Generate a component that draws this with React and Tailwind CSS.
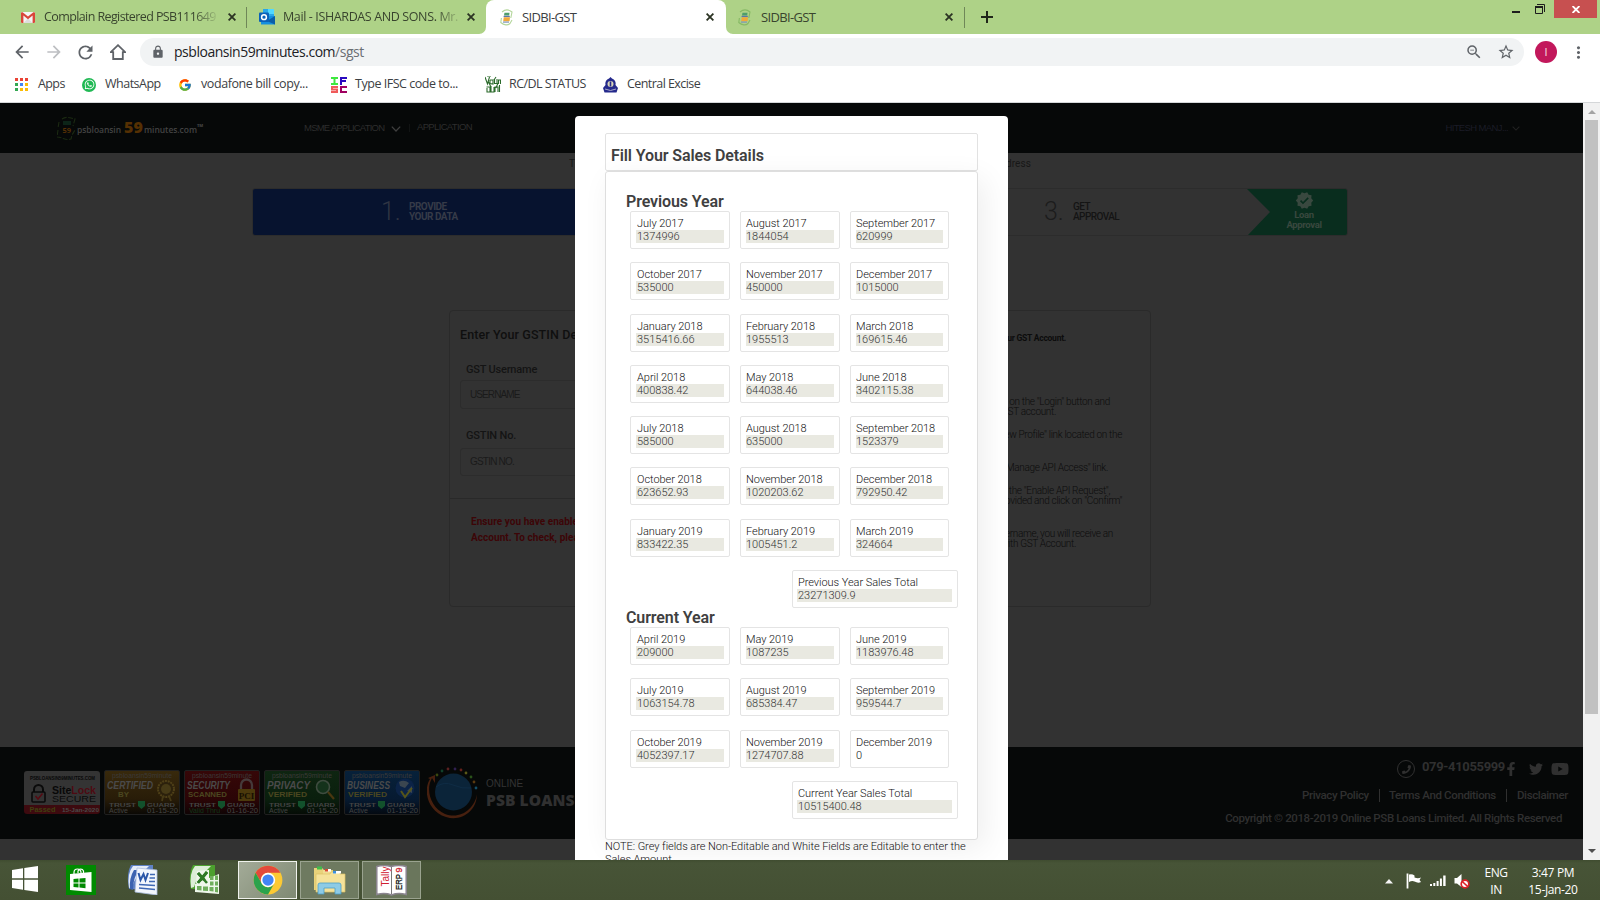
import React from "react";
import { FaFacebookF, FaTwitter, FaYoutube, FaWhatsapp, FaPhoneAlt } from "react-icons/fa";
import { FcGoogle } from "react-icons/fc";
import { MdArrowBack, MdArrowForward, MdRefresh, MdLock, MdStarBorder, MdZoomOut, MdMoreVert, MdVerified } from "react-icons/md";

const ui = "font-['Open_Sans','Noto_Sans',sans-serif] whitespace-nowrap";
const arial = "font-['Liberation_Sans',Arial,sans-serif] whitespace-nowrap";

function Close() {
  return (
    <svg className="w-[8px] h-[8px] shrink-0" viewBox="0 0 8 8">
      <path d="M0.6 0.6L7.4 7.4M7.4 0.6L0.6 7.4" stroke="#2b3323" strokeWidth="1.8" />
    </svg>
  );
}

function GmailIcon() {
  return (
    <svg className="w-[14px] h-[11px]" viewBox="0 0 14 11">
      <rect width="14" height="11" rx="1" fill="#f5f5f5" />
      <path d="M2.4 11L7 6.5 11.6 11z" fill="#ddd" />
      <path d="M0 1.2V10a1 1 0 0 0 1 1h1.4V3.6L7 7.2l4.6-3.6V11H13a1 1 0 0 0 1-1V1.2C14 .2 13 0 12.4.3L7 4.5 1.6.3C1 0 0 .2 0 1.2z" fill="#d9453a" />
    </svg>
  );
}

function OutlookIcon() {
  return (
    <svg className="w-[16px] h-[16px]" viewBox="0 0 16 16">
      <rect x="4" width="11" height="10" fill="#28a8ea" />
      <rect x="9" width="6" height="5" fill="#50d9ff" />
      <path d="M2 7L16 7V15.5H2z" fill="#1490df" />
      <path d="M16 7L8 12 16 15.5z" fill="#0a5ea8" />
      <rect y="3.5" width="10" height="9.5" rx="1" fill="#0a62b8" />
      <circle cx="5" cy="8.2" r="2.4" fill="none" stroke="#fff" strokeWidth="1.5" />
    </svg>
  );
}

function SidbiIcon({ dim }) {
  return (
    <svg className="w-[13px] h-[17px]" viewBox="0 0 13 17">
      <path d="M2 3C5 .5 9 .5 12 3L10.8 9M1.4 9L.8 13.500C4 16.500 8 16.500 10 14.500L12 11" fill="none" stroke={dim ? "#86b964" : "#b4d69b"} strokeWidth="1.1" />
      <path d="M4.500 3.800H9.500L9.200 6.600H4z" fill="#4f9e6a" />
      <rect x="3.600" y="6.800" width="6.200" height="1.300" fill="#5c77a8" />
      <path d="M3.800 8.300H10L9.500 12.200H3.200z" fill="#f0a93a" />
      <rect x="3" y="12.500" width="6" height="1.200" fill="#7d94b8" />
    </svg>
  );
}

function TabStrip() {
  return (
    <div className="flex h-[34px] bg-[#aed287] shrink-0">
      <div className="flex items-center w-[247px] pl-[21px] h-[34px] border-r border-[#6f8758] [border-image:linear-gradient(to_bottom,transparent_8px,#6f8758_8px,#6f8758_27px,transparent_27px)_1]">
        <GmailIcon />
        <div className={`${ui} text-[12.5px] leading-[18px] tracking-[-0.6px] text-[#39442e] ml-[9px] w-[176px] [mask-image:linear-gradient(to_right,#000_85%,transparent)]`}>Complain Registered PSB111649</div>
        <div className="ml-[8px] flex"><Close /></div>
      </div>
      <div className="flex items-center w-[239px] pl-[12px] h-[34px] rounded-br-[8px]">
        <OutlookIcon />
        <div className={`${ui} text-[12.5px] leading-[18px] tracking-[-0.38px] text-[#39442e] ml-[8px] w-[180px] [mask-image:linear-gradient(to_right,#000_85%,transparent)]`}>Mail - ISHARDAS AND SONS. Mr.</div>
        <div className="ml-[4px] flex"><Close /></div>
      </div>
      <div className="relative flex items-center w-[240px] pl-[14px] h-[34px] rounded-t-[8px] bg-white">
        <svg className="absolute left-[-7px] bottom-0 w-[7px] h-[7px]" viewBox="0 0 7 7"><path d="M7 0V7H0A7 7 0 0 0 7 0z" fill="#fff" /></svg>
        <svg className="absolute right-[-7px] bottom-0 w-[7px] h-[7px]" viewBox="0 0 7 7"><path d="M0 0V7H7A7 7 0 0 1 0 0z" fill="#fff" /></svg>
        <SidbiIcon />
        <div className={`${ui} text-[13px] leading-[18px] tracking-[-0.65px] text-[#3c4043] ml-[9px] w-[184px]`}>SIDBI-GST</div>
        <Close />
      </div>
      <div className="flex items-center w-[239px] pl-[12px] h-[34px] border-r border-[#6f8758] [border-image:linear-gradient(to_bottom,transparent_8px,#6f8758_8px,#6f8758_27px,transparent_27px)_1]">
        <SidbiIcon dim />
        <div className={`${ui} text-[13px] leading-[18px] tracking-[-0.65px] text-[#39442e] ml-[10px] w-[184px]`}>SIDBI-GST</div>
        <Close />
      </div>
      <svg className="w-[12px] h-[12px] mt-[11px] ml-[16px]" viewBox="0 0 12 12"><path d="M6 0V12M0 6H12" stroke="#20261a" strokeWidth="2" /></svg>
      <div className="flex ml-auto mr-[3px]">
        <div className="w-[8px] h-[2px] bg-[#1d1d1d] mt-[11px]" />
        <svg className="w-[11px] h-[11px] ml-[15px] mt-[4px]" viewBox="0 0 11 11"><path d="M2 .5H9.5V8" fill="none" stroke="#1d1d1d" /><path d="M0.5 2.5H7.5V9.5H.5z" fill="none" stroke="#1d1d1d" /><path d="M0 3H8" stroke="#1d1d1d" strokeWidth="2" /></svg>
        <div className="flex items-center justify-center ml-[8px] w-[43px] h-[18px] bg-[#c75050]">
          <svg className="w-[8px] h-[7px]" viewBox="0 0 8 7"><path d="M.6 0L7.4 7M7.4 0L.6 7" stroke="#fff" strokeWidth="1.8" /></svg>
        </div>
      </div>
    </div>
  );
}

function Toolbar() {
  return (
    <div className="flex items-center h-[36px] bg-white shrink-0 pl-[12px]">
      <MdArrowBack className="text-[20px] text-[#5f6368]" />
      <MdArrowForward className="text-[20px] text-[#bdbfc2] ml-[12px]" />
      <MdRefresh className="text-[21px] text-[#5f6368] ml-[11px]" />
      <svg className="w-[16px] h-[16px] ml-[14px]" viewBox="0 0 16 16"><path d="M0.8 8.2L8 1.2 15.2 8.2H12.8V15H3.2V8.2z" fill="none" stroke="#5f6368" strokeWidth="1.8" /></svg>
      <div className="flex items-center w-[1384px] h-[28px] ml-[14px] rounded-full bg-[#f1f3f4] pl-[11px] pr-[9px]">
        <MdLock className="text-[14px] text-[#5f6368]" />
        <div className={`${ui} text-[14px] leading-[20px] tracking-[-0.47px] text-[#202124] ml-[9px]`}>psbloansin59minutes.com<span className="text-[#6a6e73]">/sgst</span></div>
        <MdZoomOut className="text-[18px] text-[#5f6368] ml-auto" />
        <MdStarBorder className="text-[18px] text-[#5f6368] ml-[14px]" />
      </div>
      <div className="flex items-center justify-center w-[22px] h-[22px] rounded-full bg-[#c2185b] ml-[11px] text-[11px] leading-none text-[#f3cddc] font-['Roboto',sans-serif]">I</div>
      <MdMoreVert className="text-[19px] text-[#5f6368] ml-[12px]" />
    </div>
  );
}

function AppsIcon() {
  const c = ["#ea4335", "#ea4335", "#ea4335", "#34a853", "#4285f4", "#fbbc05", "#34a853", "#fbbc05", "#fbbc05"];
  return (
    <div className="grid grid-cols-3 gap-[2px] w-[13px]">
      {c.map((x, i) => <div key={i} className="w-[3px] h-[3px]" style={{ background: x }} />)}
    </div>
  );
}

const bm = `${ui} text-[12.5px] leading-[18px] text-[#3c4043] relative top-[-1px]`;

function Bookmarks() {
  return (
    <div className="flex items-center h-[33px] bg-white shrink-0 pl-[15px] pb-[3px] box-border border-b border-[#d5d7d9]">
      <AppsIcon />
      <div className={`${bm} tracking-[-0.6px] w-[27px] ml-[10px]`}>Apps</div>
      <div className="flex items-center justify-center w-[14px] h-[14px] rounded-full bg-[#20b954] ml-[17px]"><FaWhatsapp className="text-[11px] text-white" /></div>
      <div className={`${bm} tracking-[-0.5px] w-[55px] ml-[9px]`}>WhatsApp</div>
      <FcGoogle className="text-[14px] ml-[18px]" />
      <div className={`${bm} tracking-[-0.42px] w-[107px] ml-[9px]`}>vodafone bill copy...</div>
      <svg className="w-[16px] h-[16px] ml-[23px] shrink-0" viewBox="0 0 16 16" fill="none" strokeWidth="2">
        <path d="M0 1H7M3.5 1V7M0 7H7" stroke="#3ee83e" />
        <path d="M10 8V1H16M10 4H15" stroke="#2a0ac0" />
        <path d="M7 10H1V12.5H6V15H0" stroke="#f05a5a" />
        <path d="M16 10H10V15H16" stroke="#a00060" />
      </svg>
      <div className={`${bm} tracking-[-0.47px] w-[105px] ml-[8px]`}>Type IFSC code to...</div>
      <svg className="w-[16px] h-[17px] ml-[25px] shrink-0" viewBox="0 0 16 17" fill="none" stroke="#2c6b2c" strokeWidth="1.1">
        <path d="M0 1L2.5 8 4.500 1M5 4V7.500L8 8V3.500M5 4H8M9.500 3V7.500H12V3M13.500 8V4L15.500 4V8M2 0H6M1.500 11H5V16H2V12M6 10V16H9V11M10 16V11H13V16M14.500 9V16M3 5L6 11M11 1L9 4M13 7L11 12" />
      </svg>
      <div className={`${bm} tracking-[-0.55px] w-[78px] ml-[8px]`}>RC/DL STATUS</div>
      <svg className="w-[15px] h-[16px] ml-[16px] shrink-0" viewBox="0 0 15 16">
        <path d="M7.5 0L9 1.500A5.300 5.300 0 0 1 12.500 8L15 11 13.500 15.500H1.500L0 11 2.500 8A5.300 5.300 0 0 1 6 1.500z" fill="#252a8c" />
        <circle cx="7.5" cy="7" r="3" fill="#d9d6b8" /><path d="M7.5 4.500V9.500" stroke="#252a8c" strokeWidth="1.600" />
        <path d="M2 12Q7.500 15 13 12" stroke="#a9a9c9" fill="none" />
      </svg>
      <div className={`${bm} tracking-[-0.57px] ml-[9px]`}>Central Excise</div>
    </div>
  );
}

function Chevron({ className }) {
  return <svg className={className} viewBox="0 0 10 6"><path d="M.8.6L5 5 9.2.6" fill="none" stroke="currentColor" strokeWidth="1.3" /></svg>;
}

function SiteHeader() {
  return (
    <div className="flex items-start h-[50px] bg-[#060808] shrink-0 pl-[57px]">
      <svg className="w-[19px] h-[25px] mt-[13px] shrink-0" viewBox="0 0 19 25">
        <path d="M5 3C9 0 13 2 18 3L16 10M2 6L1 12M1 14L0 21C6 21 8 25 14 23L15 19 18 14" fill="none" stroke="#1b2a12" strokeWidth="1.1" strokeDasharray="5 1.5" />
        <rect x="6" y="5" width="8" height="4" fill="#0c2418" />
        <text x="9.700" y="17" fontSize="7.500" fontWeight="700" textAnchor="middle" fill="#553005" fontFamily="Open Sans, sans-serif">59</text>
      </svg>
      <div className={`${ui} flex items-baseline w-[228px] mt-[15px] leading-[18px] text-[#434343] font-semibold`}>
        <span className="text-[8.5px] w-[45px] ml-[1px] tracking-[-0.05px]">psbloansin</span>
        <span className="text-[16px] w-[20px] text-[#553003] font-extrabold ml-[2px]">59</span>
        <span className="text-[8.5px] tracking-[-0.05px]">minutes.com</span>
        <span className="text-[4px] font-extrabold relative top-[-6px]">TM</span>
      </div>
      <div className={`${arial} text-[9.5px] leading-[12px] tracking-[-0.78px] w-[78px] mt-[19px] text-[#2d2d2d]`}>MSME APPLICATION</div>
      <Chevron className="w-[10px] h-[6px] ml-[9px] mt-[23px] text-[#3f3f3f]" />
      <div className="w-px h-[8px] mt-[21px] ml-[8px] bg-[#111313]" />
      <div className={`${arial} text-[9.5px] leading-[12px] tracking-[-0.66px] mt-[18px] ml-[7px] text-[#2d2d2d]`}>APPLICATION</div>
      <div className={`${arial} text-[9.5px] leading-[12px] tracking-[-0.62px] mt-[19px] ml-auto text-[#1b1c27]`}>HITESH MANJ...</div>
      <Chevron className="w-[8px] h-[5px] ml-[4px] mr-[63px] mt-[23px] text-[#222]" />
    </div>
  );
}

function Steps() {
  return (
    <div className="flex h-[48px] w-[1096px] ml-[252px] mt-[17px] rounded-[3px] border border-[#2c2c2c] shrink-0 overflow-hidden">
      <div className="flex w-[365px] bg-[#07132f] pl-[128px]">
        <div className="w-[28px] text-[25px] leading-[46px] font-light text-[#303543]">1.</div>
        <div className="text-[10px] leading-[10px] font-bold tracking-[-0.5px] text-[#363b48] pt-[13px]">PROVIDE<br />YOUR DATA</div>
      </div>
      <div className="flex w-[365px]" />
      <div className="relative flex grow pl-[61px]">
        <div className="w-[29px] text-[25px] leading-[46px] font-light text-[#1c1c1c]">3.</div>
        <div className="text-[10px] leading-[10px] font-medium tracking-[-0.55px] text-[#141414] pt-[13px]">GET<br />APPROVAL</div>
        <div className="flex flex-col items-center w-[100px] ml-auto pl-[14px] pt-[2px] bg-[#092d1e] [clip-path:polygon(0_0,100%_0,100%_100%,1px_100%,23px_50%)] text-[#39483f]">
          <MdVerified className="text-[19px]" />
          <div className="text-[9.5px] leading-[10px] font-bold tracking-[-0.35px] text-center">Loan<br />Approval</div>
        </div>
      </div>
    </div>
  );
}

function GstPanel() {
  return (
    <div className="flex w-[702px] h-[297px] ml-[449px] mt-[74px] border border-[#2a2a2a] rounded-[4px] shrink-0 overflow-hidden">
      <div className="w-[350px] whitespace-nowrap text-[#141414]">
        <div className="pl-[10px] pt-[15px] text-[12.5px] leading-[18px] font-medium tracking-[0.1px] text-[#0f0f0f]">Enter Your GSTIN Details</div>
        <div className="pl-[16px] mt-[18px] text-[11px] leading-[16px] font-medium tracking-[-0.2px]">GST Username</div>
        <div className={`${arial} w-[330px] h-[29px] ml-[10px] mt-[2px] pl-[9px] border border-[#2c2c2c] rounded-[3px] text-[10px] leading-[28px] tracking-[-0.9px] text-[#1a1a1a]`}>USERNAME</div>
        <div className="pl-[16px] mt-[19px] text-[11px] leading-[16px] font-medium tracking-[-0.15px]">GSTIN No.</div>
        <div className={`${arial} w-[330px] h-[28px] ml-[10px] mt-[4px] pl-[9px] border border-[#2c2c2c] rounded-[3px] text-[10px] leading-[26px] tracking-[-0.8px] text-[#1a1a1a]`}>GSTIN NO.</div>
        <div className="mt-[22px] border-t border-[#292929] pl-[21px] pt-[15px] text-[10px] leading-[16px] font-bold tracking-[0.05px] text-[#3d0507]">Ensure you have enabled API access<br />Account. To check, please follow</div>
      </div>
      <div className="grow text-[10px] leading-[10px] font-light tracking-[-0.33px] text-[#0c0c0c] flex flex-col">
        <div className="whitespace-nowrap w-[266px] mt-[22px] text-right text-[8.5px] font-bold tracking-[-0.25px]">Enable API access for your GST Account.</div>
        <div className="whitespace-nowrap w-[310px] mt-[54px] text-right">Go to www.gst.gov.in, click on the "Login" button and</div>
        <div className="whitespace-nowrap w-[256px] text-right">login to your GST account.</div>
        <div className="whitespace-nowrap w-[322px] mt-[13px] text-right">Click on the "View Profile" link located on the</div>
        <div className="whitespace-nowrap w-[308px] mt-[23px] text-right">Click on the "Manage API Access" link.</div>
        <div className="whitespace-nowrap w-[310px] mt-[13px] text-right">Select "Yes" next to the "Enable API Request",</div>
        <div className="whitespace-nowrap w-[322px] text-right">choose the duration provided and click on "Confirm"</div>
        <div className="whitespace-nowrap w-[313px] mt-[23px] text-right">After entering the username, you will receive an</div>
        <div className="whitespace-nowrap w-[276px] text-right">OTP on the mobile linked with GST Account.</div>
      </div>
    </div>
  );
}

const seals = [
  { t: "CERTIFIED", s: "BY", a: "Active", d: "01-15-20", bg: "bg-[linear-gradient(#38290c,#281c08_65%,#0b0905)]", k: "medal" },
  { t: "SECURITY", s: "SCANNED", a: "Valid Thru", d: "01-16-20", bg: "bg-[linear-gradient(#360708,#2b0506_65%,#100405)]", k: "lock" },
  { t: "PRIVACY", s: "VERIFIED", a: "Active", d: "01-15-20", bg: "bg-[linear-gradient(#0e2511,#0a1f0d_65%,#050c06)]", k: "lens" },
  { t: "BUSINESS", s: "VERIFIED", a: "Active", d: "01-15-20", bg: "bg-[linear-gradient(#07213a,#061a31_65%,#040a12)]", k: "globe" },
];

function SealArt({ k }) {
  if (k === "medal") return <g><circle cx="62" cy="19" r="8" fill="#2c210c" stroke="#4f4018" strokeWidth="2" strokeDasharray="2 .8" /><circle cx="62" cy="19" r="5" fill="#463a16" /><path d="M59 26L58 31M65 26L67 31" stroke="#463a16" strokeWidth="1.800" /></g>;
  if (k === "lock") return <g><path d="M57 20V15a5.500 5.500 0 0 1 11 0V20" fill="none" stroke="#453a3a" strokeWidth="2.300" /><rect x="54" y="19" width="17" height="12" rx="1" fill="#4b390c" /><text x="62.500" y="29" fontSize="9" fontWeight="700" textAnchor="middle" fill="#160f02" fontFamily="Liberation Serif, serif">PCI</text></g>;
  if (k === "lens") return <g><circle cx="59" cy="17" r="6.500" fill="#14321b" stroke="#3f4c40" strokeWidth="1.600" /><path d="M64 22L70 29" stroke="#4a3710" strokeWidth="2.200" /></g>;
  return <g><circle cx="61" cy="18" r="9.500" fill="#0b2347" /><path d="M55 12Q60 9 65 13L61 18 56 16M63 21L68 16 68 23" fill="#3b4650" /><path d="M57 21L61 27 68 18" fill="none" stroke="#55551a" strokeWidth="2" /></g>;
}

function Seal({ t, s, a, d, bg, k }) {
  return (
    <div className={`w-[76px] h-[45px] rounded-[2px] border border-[#1f1f1f] ${bg}`}>
      <svg className="w-full h-full" viewBox="1 1 74 43" fontFamily="Liberation Sans, Arial, sans-serif" fill="#444">
        <text x="8" y="8" fontSize="7" textLength="60" lengthAdjust="spacingAndGlyphs" fill="#3c3a38">psbloansin59minute</text>
        <text x="3" y="19" fontSize="11.500" fontWeight="700" fontStyle="italic" textLength={t === "CERTIFIED" ? 46 : 43} lengthAdjust="spacingAndGlyphs" fill="#4a4a4a">{t}</text>
        <text x={s === "BY" ? 14 : 4} y="26.500" fontSize="7" fontWeight="700" textLength={s === "BY" ? 11 : 39} lengthAdjust="spacingAndGlyphs" fill="#4b4720">{s}</text>
        <SealArt k={k} />
        <text x="5" y="36.500" fontSize="4.500" fontWeight="700" textLength="27" lengthAdjust="spacingAndGlyphs">TRUST</text>
        <path d="M34 31H41V36L37.500 39 34 36z" fill="#12512c" />
        <text x="43" y="36.500" fontSize="4.500" fontWeight="700" textLength="28" lengthAdjust="spacingAndGlyphs">GUARD</text>
        <text x="5" y="43" fontSize="7.500" textLength={a === "Active" ? 19 : 31} lengthAdjust="spacingAndGlyphs" fill={a === "Active" ? "#444" : "#0f3a19"}>{a}</text>
        <text x="43" y="43" fontSize="7.500" textLength="31" lengthAdjust="spacingAndGlyphs">{d}</text>
      </svg>
    </div>
  );
}

function SiteFooter() {
  const dots = [["#39470f", 437, 775], ["#11402a", 442, 771], ["#5b2020", 448, 769], ["#302050", 455, 769], ["#64211b", 461, 770], ["#5a5818", 466, 773], ["#29521a", 471, 777], ["#5a3a10", 474, 782], ["#14506a", 476, 788]];
  return (
    <div className="flex h-[92px] bg-[#060808] shrink-0 pl-[24px] pr-[14px]">
      <svg className="w-[76px] h-[43px] mt-[24px] mr-[4px] shrink-0" viewBox="0 0 76 43" fontFamily="Liberation Sans, Arial, sans-serif">
        <path d="M3 0H73A3 3 0 0 1 76 3V34H0V3A3 3 0 0 1 3 0z" fill="#343434" />
        <path d="M0 34H76V40A3 3 0 0 1 73 43H3A3 3 0 0 1 0 40z" fill="#3d0a0f" />
        <text x="6" y="9" fontSize="5" fontWeight="700" textLength="65" lengthAdjust="spacingAndGlyphs" fill="#080808">PSBLOANSIN59MINUTES.COM</text>
        <path d="M10 21V18.500a4.500 4.500 0 0 1 9 0V21" fill="none" stroke="#0a0a0a" strokeWidth="2" />
        <rect x="8" y="21" width="13" height="10" rx="1" fill="none" stroke="#0a0a0a" strokeWidth="1.600" />
        <path d="M11.500 25L14 28 18.500 22.500" fill="none" stroke="#560a12" strokeWidth="1.500" />
        <text x="28" y="22.500" fontSize="10" fontWeight="700" textLength="44" lengthAdjust="spacingAndGlyphs" fill="#080808">Site<tspan fill="#4e0a12">Lock</tspan></text>
        <text x="28" y="31" fontSize="8.500" textLength="44" lengthAdjust="spacingAndGlyphs" fill="#0b0b0b">SECURE</text>
        <text x="5.500" y="41" fontSize="6.500" fontWeight="700" textLength="26" lengthAdjust="spacingAndGlyphs" fill="#40400f">Passed</text>
        <text x="38" y="41" fontSize="5.500" fontWeight="700" textLength="37" lengthAdjust="spacingAndGlyphs" fill="#4a4a4a">15-Jan-2020</text>
      </svg>
      <div className="flex gap-[4px] mt-[23px]">{seals.map((s) => <Seal key={s.t} {...s} />)}</div>
      <svg className="w-[52px] h-[52px] ml-[7px] mt-[20px] shrink-0" viewBox="427 767 52 52">
        <circle cx="453.500" cy="792" r="18.500" fill="#0b2439" />
        <path d="M436 787Q444 781 453 785T471 788" stroke="#0f2c45" fill="none" strokeWidth="1" />
        <path d="M432 778C425 790 431 808 445 814C461 820 475 808 477 794C477 811 461 822 446 817C427 811 423 790 430 779L428 778 435 775V783z" fill="#47200f" />
        {dots.map(([c, x, y]) => <circle key={x} cx={x} cy={y} r="1.400" fill={c} />)}
      </svg>
      <div className="ml-[7px] mt-[31px] whitespace-nowrap">
        <div className={`${arial} text-[10px] leading-[12px] text-[#343434]`}>ONLINE</div>
        <div className="font-['Open_Sans',sans-serif] text-[15.5px] leading-[18px] mt-[1px] font-extrabold tracking-[0.1px] text-[#303030]">PSB LOANS</div>
      </div>
      <div className="flex flex-col items-end ml-auto text-[#303030] font-medium whitespace-nowrap">
        <div className="flex items-center h-[18px] mt-[13px] mr-[0px]">
          <div className="flex items-center justify-center w-[18px] h-[18px] rounded-full border border-[#303030]"><FaPhoneAlt className="text-[9px] -scale-x-100" /></div>
          <div className="text-[13px] leading-[18px] font-bold tracking-[-0.35px] w-[81px] ml-[7px] mt-[-4px]">079-41055999</div>
          <FaFacebookF className="text-[14px] ml-[1px]" />
          <FaTwitter className="text-[14px] ml-[11px] mr-[8px]" />
          <FaYoutube className="text-[18px]" />
        </div>
        <div className="flex items-center mt-[10px] text-[11.5px] leading-[14px] tracking-[-0.36px] pr-[1px]">
          <span>Privacy Policy</span><span className="w-px h-[13px] bg-[#303030] ml-[10px] mr-[9px]" />
          <span>Terms And Conditions</span><span className="w-px h-[13px] bg-[#303030] ml-[10px] mr-[10px]" />
          <span>Disclaimer</span>
        </div>
        <div className="mt-[9px] text-[11.5px] leading-[14px] tracking-[-0.38px] pr-[7px]">Copyright © 2018-2019 Online PSB Loans Limited. All Rights Reserved</div>
      </div>
    </div>
  );
}

function Field({ label, value, size, pad, open }) {
  return (
    <div className={`${size} h-[38px] pr-[5px] pt-[5px] border border-[#e4e4e4] rounded-[2px] text-[11px] leading-[13px]`}>
      <div className={`h-[13px] whitespace-nowrap font-light tracking-[-0.05px] text-[#111] ${pad}`}>{label}</div>
      <div className={`h-[13px] font-light ${pad} ${open ? "text-[#111]" : "bg-[#e9e9e1] text-[#333]"}`}>{value}</div>
    </div>
  );
}

const previous = [
  ["July 2017", "1374996"], ["August 2017", "1844054"], ["September 2017", "620999"],
  ["October 2017", "535000"], ["November 2017", "450000"], ["December 2017", "1015000"],
  ["January 2018", "3515416.66"], ["February 2018", "1955513"], ["March 2018", "169615.46"],
  ["April 2018", "400838.42"], ["May 2018", "644038.46"], ["June 2018", "3402115.38"],
  ["July 2018", "585000"], ["August 2018", "635000"], ["September 2018", "1523379"],
  ["October 2018", "623652.93"], ["November 2018", "1020203.62"], ["December 2018", "792950.42"],
  ["January 2019", "833422.35"], ["February 2019", "1005451.2"], ["March 2019", "324664"],
];
const current = [
  ["April 2019", "209000"], ["May 2019", "1087235"], ["June 2019", "1183976.48"],
  ["July 2019", "1063154.78"], ["August 2019", "685384.47"], ["September 2019", "959544.7"],
  ["October 2019", "4052397.17"], ["November 2019", "1274707.88"], ["December 2019", "0"],
];

const sizes = ["w-[100px] pl-[5px]", "w-[100px] pl-[5px]", "w-[99px] pl-[5px]"];
const pads = ["pl-[1px]", "pl-0", "pl-0"];

function Fields({ items }) {
  return (
    <div className="grid grid-cols-[110px_110px_100px] auto-rows-[51.3px] ml-[24px]">
      {items.map(([l, v], i) => <Field key={l} label={l} value={v} size={sizes[i % 3]} pad={pads[i % 3]} open={v === "0"} />)}
    </div>
  );
}

function Modal() {
  const h = "text-[16px] leading-[18px] font-semibold tracking-[-0.1px] text-[#404040]";
  return (
    <div className="absolute left-[575px] top-[13px] w-[433px] h-[744px] bg-white rounded-t-[4px] overflow-hidden pl-[30px] pt-[17px]">
      <div className={`w-[373px] h-[38px] border border-[#e2e2e2] rounded-[2px] pl-[5px] pt-[13px] ${h}`}>Fill Your Sales Details</div>
      <div className="w-[373px] h-[669px] border border-[#dedede] rounded-[3px] bg-white pt-[21px] pl-[20px] shadow-[6px_8px_30px_rgba(0,0,0,0.07)]">
        <div className={`h-[18px] ${h}`}>Previous Year</div>
        <div className="-ml-[20px]"><Fields items={previous} /></div>
        <div className="ml-[166px] h-[38px]"><Field size="w-[166px] pl-[4px]" pad="pl-[1px]" label="Previous Year Sales Total" value="23271309.9" /></div>
        <div className={`h-[18px] mt-[1px] ${h}`}>Current Year</div>
        <div className="-ml-[20px]"><Fields items={current} /></div>
        <div className="ml-[166px]"><Field size="w-[166px] pl-[4px]" pad="pl-[1px]" label="Current Year Sales Total" value="10515400.48" /></div>
      </div>
      <div className="w-[373px] text-[11px] leading-[13px] font-light tracking-[-0.05px] text-[#111]">NOTE: Grey fields are Non-Editable and White Fields are Editable to enter the <br />Sales Amount.</div>
    </div>
  );
}

function Scrollbar() {
  return (
    <div className="flex flex-col items-center w-[17px] bg-[#f1f1f1] shrink-0">
      <svg className="w-[8px] h-[4px] mt-[7px]" viewBox="0 0 8 4"><path d="M4 0L8 4H0z" fill="#a3a3a3" /></svg>
      <div className="w-[13px] h-[594px] mt-[6px] bg-[#c1c1c1]" />
      <svg className="w-[8px] h-[4px] mt-auto mb-[7px]" viewBox="0 0 8 4"><path d="M4 4L8 0H0z" fill="#505050" /></svg>
    </div>
  );
}

function WordIcon() {
  return (
    <svg className="w-[31px] h-[31px]" viewBox="0 0 31 31">
      <path d="M4 1H26V26L2 25Q-1 10 4 1z" fill="#5f82c4" />
      <path d="M6 2H22L18 6Q8 12 5 23L2 24Q0 9 6 2z" fill="#e4ecf8" />
      <path d="M7 6Q2 14 3 25L6 26Q6 12 13 6z" fill="#3c63b0" />
      <path d="M10 4L30 6V31L8 28z" fill="#f2f6fd" stroke="#a9bde0" strokeWidth=".8" />
      <path d="M11.500 9L13.500 16 16.500 10 18.500 16 21 9" fill="none" stroke="#2a56a8" strokeWidth="2" />
      <path d="M23 10.500H28M22.500 14H28M22 17.500H28M12 20.500L28 21.500M12 24L28 25.500" stroke="#3f68b5" strokeWidth="1.500" />
    </svg>
  );
}

function ExcelIcon() {
  return (
    <svg className="w-[31px] h-[31px]" viewBox="0 0 31 31">
      <path d="M4 1H26V26L2 25Q-1 10 4 1z" fill="#4ca02e" />
      <path d="M6 2H22L18 6Q8 12 5 23L2 24Q0 9 6 2z" fill="#ddeed7" />
      <path d="M8 7L20 6V20L7 19z" fill="#f0f7ec" />
      <path d="M9 9L18 19M18 8L9 19" stroke="#2f7a25" strokeWidth="3" />
      <path d="M6 20L30 10V30L6 28z" fill="#eef7ea" />
      <path d="M21 12H24.500V16H21zM26 11.500H29V16H26zM21 17.500H24.500V21.500H21zM26 17.500H29V21.500H26zM8 22H12.500V26.500L8 26zM14 22.500H19V27L14 26.700zM20.500 23H24.500V27.500L20.500 27zM26 23H29V28.500L26 28z" fill="#6fae5c" />
      <path d="M9 9L18 19M18 8L9 19" stroke="#2f7a25" strokeWidth="2.600" />
    </svg>
  );
}

function ChromeIcon() {
  return (
    <svg className="w-[30px] h-[30px]" viewBox="0 0 48 48">
      <circle cx="24" cy="24" r="23" fill="#fcc934" />
      <path d="M4.100 12.500A23 23 0 0 1 43.900 12.500H24A11.500 11.500 0 0 0 14 29.700z" fill="#e24a3c" />
      <path d="M4.100 12.500L14 29.700A11.500 11.500 0 0 0 24 35.500 11.500 11.500 0 0 0 34 29.700L24 47A23 23 0 0 1 4.100 12.500z" fill="#2ba24c" />
      <circle cx="24" cy="24" r="11.500" fill="#fff" /><circle cx="24" cy="24" r="9" fill="#4285f4" />
    </svg>
  );
}

function FolderIcon() {
  return (
    <svg className="w-[33px] h-[30px]" viewBox="0 0 33 30">
      <path d="M1 3H9L11 5H20V25H1z" fill="#e9d27a" /><rect x="4" y="1.500" width="5" height="3" fill="#3fbf4a" />
      <path d="M10 5H17L19 7H27V26H10z" fill="#f1dd91" /><rect x="12" y="4" width="6" height="2.500" fill="#fff" /><rect x="12" y="4" width="3" height="2.500" fill="#d9472f" />
      <path d="M18 7H26L27 9H32V27H3V9H17z" fill="#f5e29a" stroke="#dcc265" strokeWidth=".7" /><rect x="20" y="6" width="8" height="2.500" fill="#fff" /><rect x="20" y="6" width="3" height="2.500" fill="#3a8fe0" />
      <path d="M5 29V20Q5 18 7 18H26Q28 18 28 20V29H22V23H11V29z" fill="#8ecbe6" stroke="#4c9fc6" strokeWidth=".8" />
    </svg>
  );
}

function TallyIcon() {
  return (
    <svg className="w-[31px] h-[31px]" viewBox="0 0 31 31" fontFamily="Liberation Sans, Arial, sans-serif">
      <path d="M.8 1.500Q8-.5 15 1.500 23-.5 30.200 1.500V29.500Q22 27.500 15.500 30 9 27.500.8 29.500z" fill="#fff" stroke="#8b8590" strokeWidth="1.500" />
      <path d="M15.500 2V29" stroke="#777" strokeWidth="1" />
      <text transform="translate(12.500 21.500) rotate(-90)" fontSize="10.500" textLength="20" lengthAdjust="spacingAndGlyphs" fill="#d02030">Tally</text>
      <text transform="translate(26 25) rotate(-90)" fontSize="8.500" textLength="16" stroke="#111" strokeWidth=".3" lengthAdjust="spacingAndGlyphs" fill="#111">ERP</text>
      <text transform="translate(26 7.500) rotate(-90)" fontSize="9" fill="#d02030" stroke="#d02030" strokeWidth=".3">9</text>
    </svg>
  );
}

function Taskbar() {
  const btn = "flex items-center justify-center w-[59px] h-[38px] mt-[1px] border";
  return (
    <div className="flex h-[40px] shrink-0 bg-[linear-gradient(#3f4c30,#475437_8%,#445033)] pl-[12px]">
      <svg className="w-[26px] h-[26px] mt-[6px]" viewBox="0 0 26 26" fill="#fff"><path d="M0 4L11 2.300V12.300H0zM12.300 2.100L26 0V12.300H12.300zM0 13.700H11V23.700L0 22zM12.300 13.700H26V26L12.300 23.900z" /></svg>
      <svg className="w-[30px] h-[30px] mt-[5px] ml-[28px]" viewBox="0 0 30 30">
        <rect width="30" height="30" fill="#008a00" /><path d="M4 9L25.500 7V27L4 25z" fill="#fff" />
        <path d="M8 9V7.500a3.500 3.500 0 0 1 7 0V8M12 8V6a3 3 0 0 1 5.500 0V8" fill="none" stroke="#fff" strokeWidth="1.200" />
        <path d="M7.500 14L12.500 13.500V17.500H7.500zM13.500 13.400L19.500 13V17.500H13.500zM7.500 18.500H12.500V22.500L7.500 22zM13.500 18.500H19.500V23.200L13.500 22.600z" fill="#008a00" />
      </svg>
      <div className="ml-[31px] mt-[4px]"><WordIcon /></div>
      <div className="ml-[31px] mt-[4px]"><ExcelIcon /></div>
      <div className={`${btn} ml-[18px] bg-[linear-gradient(135deg,#a3ab98,#7f8973)] border-[#f0f2ed]`}><ChromeIcon /></div>
      <div className={`${btn} ml-[3px] bg-[#6e7a60] border-[#9aa38f]`}><FolderIcon /></div>
      <div className={`${btn} ml-[3px] bg-[#6a765c] border-[#9aa38f]`}><TallyIcon /></div>
      <div className="flex ml-auto pr-[22px]">
        <svg className="w-[8px] h-[5px] mt-[19px]" viewBox="0 0 8 5"><path d="M4 0L8 4.500H0z" fill="#f5f5f5" /></svg>
        <svg className="w-[16px] h-[16px] mt-[13px] ml-[13px]" viewBox="0 0 16 16"><path d="M1.500 .5V15.500" stroke="#fff" strokeWidth="1.800" /><path d="M3 1.500Q6 .5 8.500 2.500V4.500Q12 6 15 4.500L13.500 7 15 9Q12 10.500 8.500 8.500 6 7.500 3 9z" fill="#fff" /></svg>
        <svg className="w-[16px] h-[12px] mt-[15px] ml-[8px]" viewBox="0 0 16 12" fill="#fff"><path d="M0 9H2V11H0zM3.300 8H5.300V11H3.300zM6.600 6H8.600V11H6.600zM9.900 3.500H11.900V11H9.900zM13.200 0.500H15.600V11H13.200z" /></svg>
        <svg className="w-[16px] h-[15px] mt-[14px] ml-[8px]" viewBox="0 0 16 15"><path d="M.5 4H3L7.500 0V13L3 9.500H.5z" fill="#fff" /><circle cx="11" cy="10" r="3.800" fill="#fff" stroke="#dc2127" strokeWidth="1.700" /><path d="M8.300 7.500L13.700 12.500" stroke="#dc2127" strokeWidth="1.700" /></svg>
        <div className={`${ui} text-[12px] leading-[17px] tracking-[-0.5px] text-white text-center w-[30px] ml-[11px] pt-[4px]`}>ENG<br />IN</div>
        <div className={`${ui} text-[12px] leading-[17px] tracking-[-0.35px] text-white text-center w-[60px] ml-[12px] -mr-[5px] pt-[4px]`}>3:47 PM<br />15-Jan-20</div>
      </div>
    </div>
  );
}

export default function App() {
  return (
    <div className="flex flex-col w-[1600px] h-[900px] overflow-hidden font-['Roboto',sans-serif]">
      <TabStrip />
      <Toolbar />
      <Bookmarks />
      <div className="flex h-[757px] shrink-0">
        <div className="relative flex flex-col w-[1583px] bg-[#323232] overflow-hidden">
          <SiteHeader />
          <div className="flex justify-between h-[18px] pl-[569px] pr-[552px] text-[10px] leading-[21px] text-[#171717] whitespace-nowrap shrink-0">
            <span>T</span><span className="tracking-[0.1px]">email address</span>
          </div>
          <Steps />
          <GstPanel />
          <div className="grow" />
          <SiteFooter />
          <div className="h-[21px] shrink-0" />
          <Modal />
        </div>
        <Scrollbar />
      </div>
      <Taskbar />
    </div>
  );
}
